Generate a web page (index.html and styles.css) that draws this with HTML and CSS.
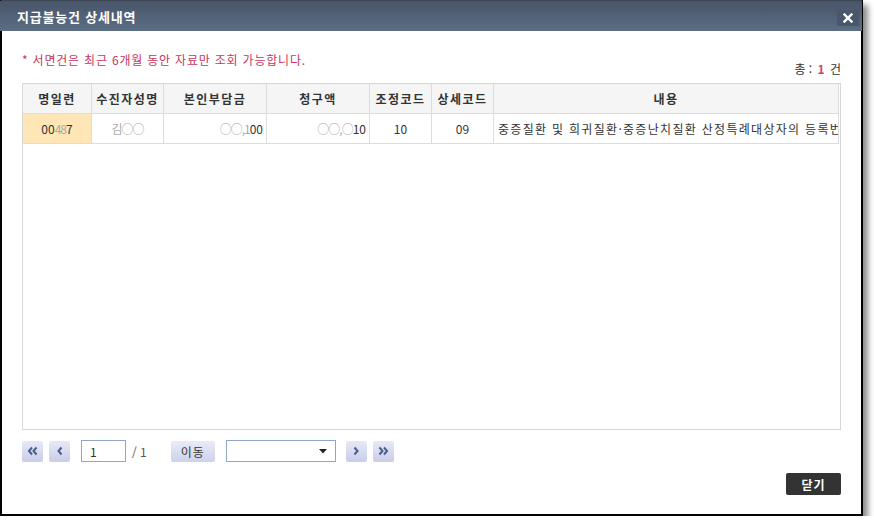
FILE: index.html
```html
<!doctype html>
<html lang="ko">
<head>
    <meta charset="UTF-8">
    <title>지급불능건 상세내역</title>
    <link rel="stylesheet" href="styles.css">
</head>
<body>
<div class="window">
    <div class="title-bar">
        <span class="title">지급불능건 상세내역</span>
        <button class="close-x" title="닫기">
            <svg width="10" height="10" viewBox="0 0 10 10">
                <path d="M1.5 1.5 L8.5 8.5 M8.5 1.5 L1.5 8.5" stroke="#fff" stroke-width="2.4" stroke-linecap="square"/>
            </svg>
        </button>
    </div>
    <div class="content">
        <div class="info">
            <p class="notice">* 서면건은 최근 6개월 동안 자료만 조회 가능합니다.</p>
            <p class="total">총 : <b>1</b> 건</p>
        </div>

        <div class="grid">
            <table>
                <colgroup>
                    <col style="width: 69px;">
                    <col style="width: 72px;">
                    <col style="width: 103px;">
                    <col style="width: 103px;">
                    <col style="width: 62px;">
                    <col style="width: 62px;">
                    <col>
                </colgroup>
                <tr>
                    <th>명일련</th>
                    <th>수진자성명</th>
                    <th>본인부담금</th>
                    <th>청구액</th>
                    <th>조정코드</th>
                    <th>상세코드</th>
                    <th>내용</th>
                </tr>
                <tr>
                    <td class="selected">00<span class="masked">48</span>7</td>
                    <td><span class="masked">김○○</span></td>
                    <td class="num"><span class="masked">○○,1</span>00</td>
                    <td class="num"><span class="masked">○○,○</span>10</td>
                    <td>10</td>
                    <td>09</td>
                    <td class="text"><div class="clip">중증질환 및 희귀질환·중증난치질환 산정특례대상자의 등록번호</div></td>
                </tr>
            </table>
        </div>

        <div class="pager">
            <button class="page-btn">
                <svg width="12" height="10" viewBox="0 0 12 10">
                    <path d="M5 1.5 L2 5 L5 8.5 M9.5 1.5 L6.5 5 L9.5 8.5" fill="none" stroke="#4e5a8a" stroke-width="2"/>
                </svg>
            </button>
            <button class="page-btn">
                <svg width="8" height="10" viewBox="0 0 8 10">
                    <path d="M5.5 1.5 L2.5 5 L5.5 8.5" fill="none" stroke="#4e5a8a" stroke-width="2"/>
                </svg>
            </button>
            <input class="page-input" type="text" value="1">
            <span class="page-total">/ 1</span>
            <button class="go-btn">이동</button>
            <div class="select">
                <svg width="8" height="5" viewBox="0 0 8 5">
                    <path d="M0 0 L8 0 L4 4.5 Z" fill="#222"/>
                </svg>
            </div>
            <button class="page-btn">
                <svg width="8" height="10" viewBox="0 0 8 10">
                    <path d="M2.5 1.5 L5.5 5 L2.5 8.5" fill="none" stroke="#4e5a8a" stroke-width="2"/>
                </svg>
            </button>
            <button class="page-btn">
                <svg width="12" height="10" viewBox="0 0 12 10">
                    <path d="M2.5 1.5 L5.5 5 L2.5 8.5 M7 1.5 L10 5 L7 8.5" fill="none" stroke="#4e5a8a" stroke-width="2"/>
                </svg>
            </button>
        </div>

        <div class="actions">
            <button class="close-btn">닫기</button>
        </div>
    </div>
</div>
</body>
</html>
```

FILE: styles.css
```css
body {
    margin: 0;
    background: #fff;
    font-family: "Noto Sans CJK KR", "Noto Sans", sans-serif;
    font-size: 12px;
    color: #333;
}

p {
    margin: 0;
}

button {
    font-family: inherit;
    padding: 0;
    cursor: pointer;
}

.window {
    box-sizing: border-box;
    width: 863px;
    height: 516px;
    background: #fff;
    border: 2px solid #000;
    border-top: 1px solid #3d4857;
    box-shadow: 5px 5px 6px rgba(0, 0, 0, 0.45);
}

.title-bar {
    display: flex;
    align-items: center;
    justify-content: space-between;
    height: 30px;
    margin: 0 -1px 0 -2px;
    padding: 0 3px 0 17px;
    background: linear-gradient(#48546a, #5b6e84);
}

.title {
    color: #fff;
    font-size: 13px;
    font-weight: bold;
    letter-spacing: 0.8px;
}

.close-x {
    display: flex;
    align-items: center;
    justify-content: center;
    width: 22px;
    height: 16px;
    margin-top: 4px;
    border: none;
    background: #4a576a;
}

.content {
    padding: 0 20px;
}

.info {
    display: flex;
    justify-content: space-between;
    align-items: flex-start;
    height: 25px;
    margin-top: 21px;
}

.notice {
    color: #c8365f;
    line-height: 16px;
    letter-spacing: 0.8px;
}

.total {
    margin-top: 9px;
    line-height: 16px;
    color: #333;
}

.total b {
    color: #d2456a;
    margin: 0 2px;
}

.grid {
    box-sizing: border-box;
    height: 347px;
    margin-top: 6px;
    border: 1px solid #d6d6d6;
    overflow: hidden;
}

table {
    width: 100%;
    border-collapse: collapse;
    table-layout: fixed;
    margin: -1px 0 0 -1px;
}

th,
td {
    height: 29px;
    padding: 0 3px;
    border: 1px solid #dcdcdc;
    text-align: center;
    white-space: nowrap;
    overflow: hidden;
}

th {
    background: #f5f5f5;
    font-weight: bold;
    color: #333;
    letter-spacing: 1.5px;
}

td {
    color: #333;
}

td.selected {
    background: #fee6b6;
}

td.num {
    text-align: right;
}

td.text {
    text-align: left;
    padding: 0 0 0 4px;
    letter-spacing: 1.3px;
}

.clip {
    overflow: hidden;
}

.masked {
    color: #aaa;
    letter-spacing: -1px;
}

.pager {
    display: flex;
    align-items: center;
    height: 22px;
    margin-top: 10px;
}

.page-btn {
    display: flex;
    align-items: center;
    justify-content: center;
    width: 21px;
    height: 21px;
    margin-right: 6px;
    border: none;
    border-radius: 2px;
    background: linear-gradient(#e6e9f8, #c8cde9);
}

.page-input {
    box-sizing: border-box;
    width: 45px;
    height: 22px;
    margin-left: 5px;
    padding: 0 8px;
    border: 1px solid #8fa6c7;
    font-family: inherit;
    font-size: 12px;
    color: #333;
}

.page-total {
    margin: 0 24px 0 6px;
    color: #555;
}

.go-btn {
    width: 44px;
    height: 21px;
    border: none;
    border-radius: 2px;
    background: linear-gradient(#e9ebf8, #cdd2ea);
    font-size: 12px;
    color: #333;
    letter-spacing: 1px;
}

.select {
    box-sizing: border-box;
    display: flex;
    align-items: center;
    justify-content: flex-end;
    width: 110px;
    height: 22px;
    margin: 0 10px 0 11px;
    padding-right: 8px;
    border: 1px solid #8fa6c7;
}

.actions {
    display: flex;
    justify-content: flex-end;
    margin-top: 11px;
}

.close-btn {
    width: 55px;
    height: 22px;
    border: none;
    border-radius: 2px;
    background: #333;
    color: #fff;
    font-size: 12px;
    font-weight: bold;
    letter-spacing: 1px;
}
```
